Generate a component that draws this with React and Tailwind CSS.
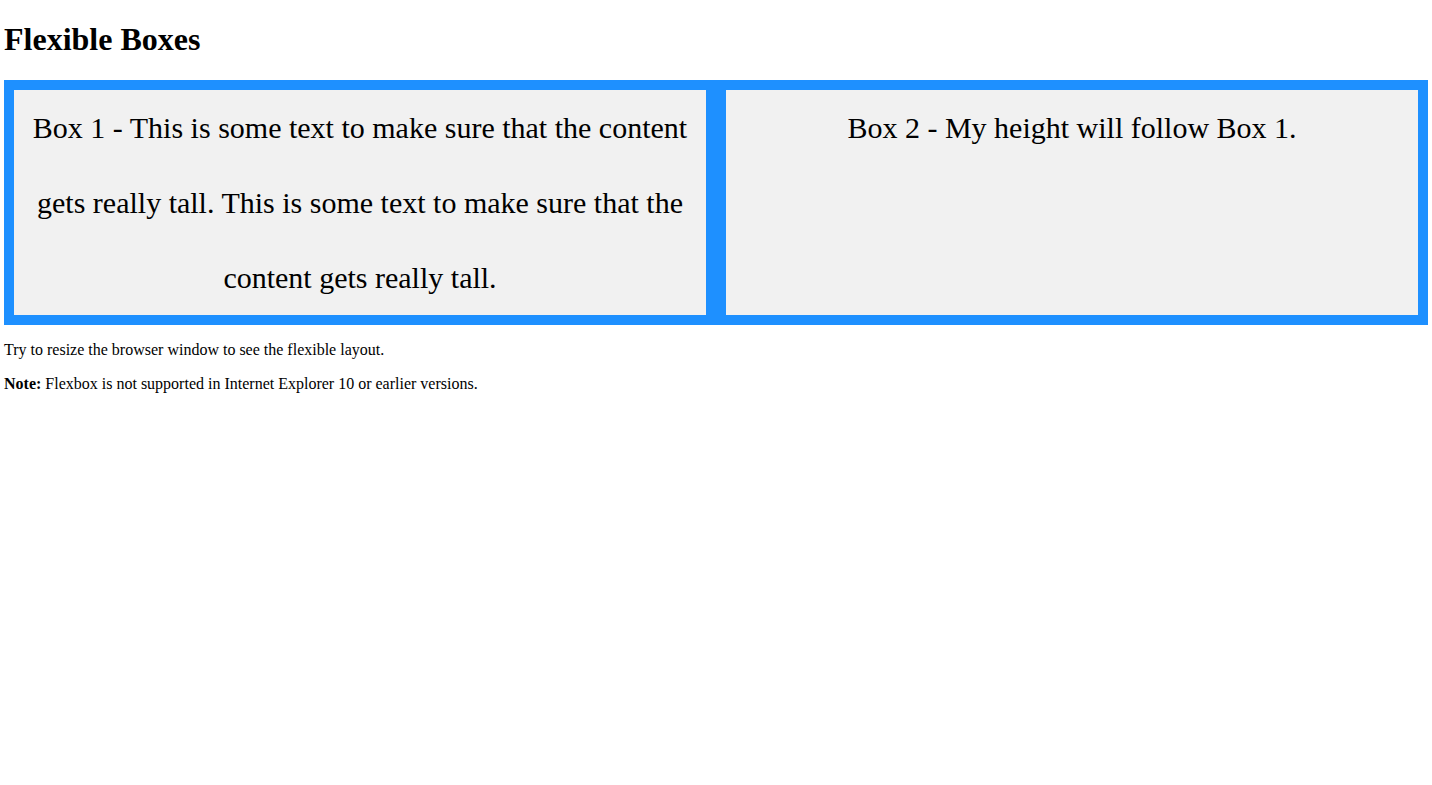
export default function App() {
  return (
    <div className="min-h-screen bg-white px-1 font-['Liberation_Serif','Times_New_Roman',serif] text-black">
      {/* HEADING */}
      <h1 className="pt-[21.44px] pb-[21.44px] text-[32px] font-bold leading-[36.8px]">
        Flexible Boxes
      </h1>

      {/* FLEX CONTAINER */}
      <div className="flex bg-[#1e90ff]">
        <div className="m-[10px] flex-1 bg-[#f1f1f1] text-center text-[30px] leading-[75px]">
          Box 1 - This is some text to make sure that the content gets really tall. This is some text to make sure that the content gets really tall.
        </div>

        <div className="m-[10px] flex-1 bg-[#f1f1f1] text-center text-[30px] leading-[75px]">
          Box 2 - My height will follow Box 1.
        </div>
      </div>

      <p className="mt-4 text-base leading-[18.4px]">
        Try to resize the browser window to see the flexible layout.
      </p>

      <p className="mt-4 text-base leading-[18.4px]">
        <b>Note:</b> Flexbox is not supported in Internet Explorer 10 or earlier versions.
      </p>
    </div>
  )
}
